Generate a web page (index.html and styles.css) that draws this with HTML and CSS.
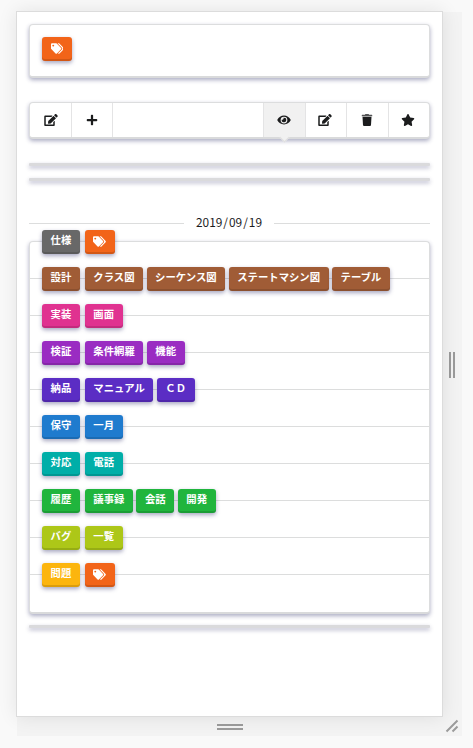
FILE: index.html
```html
<!DOCTYPE html>
<html lang="ja">
<head>
<meta charset="utf-8">
<title>2019/09/19</title>
<link rel="stylesheet" href="styles.css">
</head>
<body>
<svg class="defs" aria-hidden="true">
  <symbol id="tags" viewBox="0 0 640 512"><path d="M497.9 225.9 286.1 14.1A48 48 0 0 0 252.1 0H48A48 48 0 0 0 0 48v204.100a48 48 0 0 0 14.100 33.900l211.800 211.900c18.700 18.700 49.100 18.700 67.900 0l204.100-204.100c18.700-18.700 18.700-49.100 0-67.900zM112 160a48 48 0 1 1 0-96 48 48 0 0 1 0 96zm513.900 133.800L421.800 497.900c-18.700 18.700-49.100 18.700-67.900 0l-.4-.4 174.100-174.100a85 85 0 0 0 0-120.200L324.400 0h55.700a48 48 0 0 1 33.900 14.100l211.900 211.800c18.700 18.700 18.700 49.100 0 67.900z"/></symbol>
  <symbol id="edit" viewBox="0 0 576 512"><path d="m402.600 83.200 90.200 90.200c3.800 3.800 3.800 10 0 13.800L274.400 405.600l-92.800 10.300c-12.400 1.400-22.900-9.100-21.500-21.500l10.300-92.800L388.800 83.200c3.800-3.800 10-3.800 13.800 0zm162-22.900-48.800-48.800c-15.200-15.200-39.900-15.200-55.200 0l-35.400 35.400c-3.800 3.800-3.800 10 0 13.800l90.200 90.200c3.800 3.800 10 3.800 13.800 0l35.400-35.400c15.200-15.300 15.200-40 0-55.200zM384 346.200V448H64V128h229.800c3.200 0 6.200-1.300 8.500-3.500l40-40c7.600-7.600 2.200-20.500-8.500-20.500H48C21.500 64 0 85.500 0 112v352c0 26.500 21.500 48 48 48h352c26.500 0 48-21.500 48-48V306.200c0-10.700-12.900-16-20.500-8.500l-40 40c-2.200 2.300-3.500 5.300-3.500 8.500z"/></symbol>
  <symbol id="plus" viewBox="0 0 448 512"><path d="M416 208H272V64a32 32 0 0 0-32-32h-32a32 32 0 0 0-32 32v144H32a32 32 0 0 0-32 32v32a32 32 0 0 0 32 32h144v144a32 32 0 0 0 32 32h32a32 32 0 0 0 32-32V304h144a32 32 0 0 0 32-32v-32a32 32 0 0 0-32-32z"/></symbol>
  <symbol id="eye" viewBox="0 0 576 512"><path d="M572.500 241.400C518.300 135.600 410.900 64 288 64S57.700 135.600 3.500 241.400a32 32 0 0 0 0 29.200C57.700 376.400 165.100 448 288 448s230.300-71.600 284.500-177.400a32 32 0 0 0 0-29.200zM288 400a144 144 0 1 1 0-288 144 144 0 0 1 0 288zm0-240a95 95 0 0 0-25.300 3.800 47.900 47.900 0 0 1-66.900 66.900A95.800 95.800 0 1 0 288 160z"/></symbol>
  <symbol id="trash" viewBox="0 0 448 512"><path class="lid" d="M432 32H312l-9-19a24 24 0 0 0-22-13H167a24 24 0 0 0-22 13l-9 19H16A16 16 0 0 0 0 48v32a16 16 0 0 0 16 16h416a16 16 0 0 0 16-16V48a16 16 0 0 0-16-16z"/><path d="m32 112 21 355a48 48 0 0 0 48 45h246a48 48 0 0 0 48-45l21-355z"/></symbol>
  <symbol id="star" viewBox="0 0 576 512"><path d="m259.300 17.800-65.300 132.400-146.100 21.300c-26.200 3.800-36.700 36.100-17.700 54.600l105.700 103-25 145.500c-4.500 26.300 23.200 46 46.400 33.700L288 439.600l130.700 68.700c23.200 12.200 50.900-7.400 46.400-33.700l-25-145.500 105.700-103c19-18.500 8.500-50.800-17.700-54.600L382 150.200 316.700 17.800c-11.700-23.600-45.600-23.900-57.400 0z"/></symbol>
</svg>
<div class="stage">
  <main class="device">
    <section class="card search"><span class="label orange tag"><svg><use href="#tags"/></svg></span></section>
    <nav class="card menu">
      <a class="item"><svg><use href="#edit"/></svg></a>
      <a class="item"><svg><use href="#plus"/></svg></a>
      <span class="space"></span>
      <a class="item active"><svg><use href="#eye"/></svg></a>
      <a class="item"><svg><use href="#edit"/></svg></a>
      <a class="item"><svg><use href="#trash"/></svg></a>
      <a class="item"><svg><use href="#star"/></svg></a>
    </nav>
    <div class="empty"></div>
    <div class="empty"></div>
    <div class="date"><span>2019<i>/</i>09<i>/</i>19</span></div>
    <section class="card list">
      <div class="row grey"><span class="label">仕様</span><span class="label orange tag"><svg><use href="#tags"/></svg></span></div>
      <div class="row brown"><span class="label">設計</span><span class="label">クラス図</span><span class="label">シーケンス図</span><span class="label">ステートマシン図</span><span class="label">テーブル</span></div>
      <div class="row pink"><span class="label">実装</span><span class="label">画面</span></div>
      <div class="row purple"><span class="label">検証</span><span class="label">条件網羅</span><span class="label">機能</span></div>
      <div class="row violet"><span class="label">納品</span><span class="label">マニュアル</span><span class="label">ＣＤ</span></div>
      <div class="row blue"><span class="label">保守</span><span class="label">一月</span></div>
      <div class="row teal"><span class="label">対応</span><span class="label">電話</span></div>
      <div class="row green"><span class="label">履歴</span><span class="label">議事録</span><span class="label">会話</span><span class="label">開発</span></div>
      <div class="row olive"><span class="label">バグ</span><span class="label">一覧</span></div>
      <div class="row yellow"><span class="label">問題</span><span class="label orange tag"><svg><use href="#tags"/></svg></span></div>
    </section>
    <div class="empty last"></div>
  </main>
  <div class="handle right"><span></span></div>
  <div class="handle bottom"><span></span></div>
  <div class="handle corner"><svg viewBox="0 0 14 14"><path d="M1.500 12.500 12.500 1.500M7.500 12.500 12.500 7.500"/></svg></div>
</div>
</body>
</html>
```
FILE: styles.css
```css
* { box-sizing: border-box; }
body {
  margin: 0;
  height: 748px;
  overflow: hidden;
  background: #f9f9f9;
  font-family: "Noto Sans CJK JP", sans-serif;
  color: #1b1c1d;
}
.defs { display: none; }
.stage {
  display: grid;
  grid-template-columns: 427px 19px;
  grid-template-rows: 706px 19px;
  padding: 11px 0 0 16px;
}
.device {
  position: relative;
  z-index: 1;
  display: flex;
  flex-direction: column;
  padding: 12px;
  background: #fff;
  border: 1px solid #dcdcdc;
  box-shadow: 0 0 18px rgba(0, 0, 0, .09);
}
.card {
  flex: none;
  background: #fff;
  border: 1px solid #dcddde;
  border-bottom: 2px solid #d9dadb;
  border-radius: 4px;
  box-shadow: 0 2px 4px rgba(34, 36, 98, .38);
}
.search { height: 54px; padding: 12px; display: flex; }
.menu { height: 37px; margin-top: 24px; display: flex; }
.item {
  position: relative;
  flex: 0 0 41.500px;
  display: flex;
  align-items: center;
  justify-content: center;
  padding: 0 1px 1px 0;
  border-left: 1px solid #e4e4e5;
}
.item:first-child { flex-basis: 41px; padding-right: 0; border-left: 0; }
.item:nth-child(2) { flex-basis: 41px; }
.item svg { width: 14px; height: 12px; fill: currentColor; }
.space { flex: 1; border-left: 1px solid #e4e4e5; }
.active { background: #f1f1f1; }
.active::after {
  content: "";
  position: absolute;
  left: 17px;
  bottom: -4px;
  width: 6px;
  height: 6px;
  background: #f1f1f1;
  border: solid #dedede;
  border-width: 0 1px 1px 0;
  transform: rotate(45deg);
}
.lid { opacity: .75; }
.empty {
  flex: none;
  height: 3px;
  margin-top: 12px;
  background: #dadadc;
  border-radius: 1px;
  box-shadow: 0 2px 4px rgba(34, 36, 98, .34);
}
.menu + .empty { margin-top: 24px; }
.list + .empty { margin-top: 11px; }
.date {
  display: flex;
  align-items: center;
  gap: 12px;
  height: 20px;
  margin-top: 32px;
  font-size: 11.900px;
  line-height: 18px;
}
.date span { padding-bottom: 2px; }
.date::before, .date::after { content: ""; flex: 1; height: 1px; background: #dcdddd; }
.date::before { flex: 0 0 155px; }
.date i { display: inline-block; width: 6.600px; text-align: center; font-style: normal; }
.list { height: 373px; margin-top: 8px; }
.row {
  display: flex;
  align-items: center;
  height: 24px;
  margin-bottom: 13px;
  padding-left: 12px;
  gap: 3.500px;
  background: linear-gradient(#dcdddd, #dcdddd) 0 11px / 100% 1px no-repeat;
}
.row:first-child { margin-top: -12px; background: none; }
.label {
  flex: none;
  height: 24px;
  padding: 0 8.550px;
  font-size: 10.350px;
  font-weight: 700;
  line-height: 20px;
  color: #fff;
  background: var(--c);
  border-radius: 3px;
  box-shadow: inset 0 -2px rgba(0, 0, 0, .13), 0 2px 4px rgba(34, 36, 98, .4);
}
.row .label:first-child { margin-right: 1.500px; }
.tag { display: flex; align-items: center; width: 30px; padding-bottom: 2px; }
.tag svg { width: 13px; height: 11px; fill: #fff; }
.grey { --c: #686868; }
.brown { --c: #a05c36; }
.pink { --c: #e03290; }
.purple { --c: #9a2cc2; }
.violet { --c: #5b2dc4; }
.blue { --c: #1f7bce; }
.teal { --c: #00aea8; }
.green { --c: #20b53d; }
.olive { --c: #adc718; }
.yellow { --c: #fcb50e; }
.orange { --c: #f26419; }
.handle { display: flex; align-items: center; justify-content: center; background: #f3f3f3; }
.right { margin-top: 1px; padding-right: 1px; }
.bottom { margin-left: 1px; }
.corner { padding: 0 1px 1px 0; }
.right span { width: 6px; height: 26px; border: solid #9b9b9b; border-width: 0 2px; }
.bottom span { width: 26px; height: 6px; border: solid #9b9b9b; border-width: 2px 0; }
.corner svg { width: 14px; height: 14px; fill: none; stroke: #9b9b9b; stroke-width: 2; }
```
